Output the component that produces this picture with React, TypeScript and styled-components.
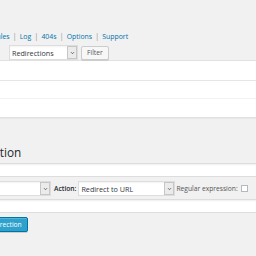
import React from 'react'
import styled, { createGlobalStyle } from 'styled-components'

const GlobalStyle = createGlobalStyle`
  html, body {
    margin: 0;
    padding: 0;
    background: #f1f1f1;
    overflow: hidden;
  }
  body {
    font-family: "Open Sans", "Liberation Sans", sans-serif;
    font-size: 6.7px;
    color: #444;
  }
`

const Page = styled.div`
  width: 256px;
  height: 256px;
  overflow: hidden;
  padding-top: 32px;
  box-sizing: border-box;
`

const SubNav = styled.ul`
  list-style: none;
  display: flex;
  margin: 0 0 0 -92px;
  padding: 0;
  height: 10px;
  line-height: 10px;
  font-size: 6.9px;
  white-space: nowrap;
  color: #8a8a8a;
`

const NavItem = styled.li`
  & + &::before {
    content: '|';
    margin: 0 3.2px;
  }
`

const NavLink = styled.a`
  color: #0073aa;
  text-decoration: none;
`

const TableNav = styled.div`
  display: flex;
  align-items: center;
  gap: 3px;
  height: 15px;
  margin: 3px 0 0 9px;
`

const SelectFrame = styled.div<{ $w: number; $shift?: number }>`
  display: flex;
  align-items: center;
  justify-content: space-between;
  flex: none;
  width: ${p => p.$w}px;
  height: 15px;
  margin-left: ${p => p.$shift ?? 0}px;
  box-sizing: border-box;
  border: 1px solid #ddd;
  background: #fff;
  box-shadow: inset 0 1px 2px rgba(0, 0, 0, 0.05);
  font-size: 7.2px;
  color: #32373c;
`

const SelectText = styled.span`
  padding-left: 2px;
  white-space: nowrap;
`

const SelectArrow = styled.span`
  display: flex;
  align-items: center;
  justify-content: center;
  width: 10px;
  height: 13px;
  box-sizing: border-box;
  background: #ebebeb;
  border: 1px solid #c6c6c6;
`

const Button = styled.button`
  height: 14px;
  padding: 0 5px;
  box-sizing: border-box;
  border: 1px solid #ccc;
  border-radius: 2px;
  background: #f7f7f7;
  box-shadow: 0 1px 0 #ccc;
  font: inherit;
  font-size: 6.7px;
  line-height: 12px;
  color: #555;
`

const PrimaryButton = styled(Button)`
  height: 15px;
  margin: 4px 0 0 -33px;
  border-color: #0074a2;
  background: #2ea2cc;
  box-shadow: inset 0 1px 0 rgba(120, 200, 230, 0.5), 0 1px 0 rgba(0, 0, 0, 0.15);
  color: #fff;
  padding: 0 5px 0 4px;
`

const ListTable = styled.div`
  margin: 0 -10px;
  border: 1px solid #e1e1e1;
  background: #fff;
  box-shadow: 0 1px 1px rgba(0, 0, 0, 0.04);
`

const Row = styled.div<{ $h: number; $line?: string }>`
  height: ${p => p.$h}px;
  border-bottom: ${p => (p.$line ? `1px solid ${p.$line}` : 'none')};
`

const Heading = styled.h2`
  margin: 27px 0 0 -90px;
  font-size: 11.8px;
  font-weight: 400;
  line-height: 15px;
  color: #23282d;
  white-space: nowrap;
`

const TextInput = styled.input`
  display: block;
  width: calc(100% + 20px);
  height: 14px;
  margin: 3px -10px 0;
  box-sizing: border-box;
  border: 1px solid #ddd;
  background: #fff;
  box-shadow: inset 0 1px 2px rgba(0, 0, 0, 0.07);
  outline: none;
`

const MatchRow = styled.div`
  display: flex;
  align-items: center;
  height: 15px;
  margin-top: 4px;
  white-space: nowrap;
`

const Label = styled.span<{ $bold?: boolean; $gap: number }>`
  margin-left: ${p => p.$gap}px;
  font-weight: ${p => (p.$bold ? 600 : 400)};
  color: ${p => (p.$bold ? '#23282d' : '#555')};
`

const CheckBox = styled.span`
  width: 7px;
  height: 7px;
  margin-left: 3px;
  box-sizing: border-box;
  border: 1px solid #b4b9be;
  background: #fff;
`

function Chevron() {
  return (
    <svg width="5" height="4" viewBox="0 0 5 4">
      <path d="M1 1.2 L2.5 2.7 L4 1.2" fill="none" stroke="#555" strokeWidth="0.9" />
    </svg>
  )
}

function Select({ value, w, shift }: { value: string; w: number; shift?: number }) {
  return (
    <SelectFrame $w={w} $shift={shift}>
      <SelectText>{value}</SelectText>
      <SelectArrow>
        <Chevron />
      </SelectArrow>
    </SelectFrame>
  )
}

const links = ['Redirects', 'Groups', 'Modules', 'Log', '404s', 'Options', 'Support']

export default function App() {
  return (
    <>
      <GlobalStyle />
      <Page>
        <SubNav>
          {links.map(l => (
            <NavItem key={l}>
              <NavLink href="#">{l}</NavLink>
            </NavItem>
          ))}
        </SubNav>

        <TableNav>
          <Select value="Redirections" w={69} />
          <Button>Filter</Button>
        </TableNav>

        <ListTable>
          <Row $h={19} $line="#e5e5e5" />
          <Row $h={17} $line="#f2f2f2" />
          <Row $h={18} />
        </ListTable>

        <Heading>Add new redirection</Heading>

        <TextInput />
        <MatchRow>
          <Select value="URL only" w={151} shift={-100} />
          <Label $bold $gap={3}>Action:</Label>
          <Select value="Redirect to URL" w={97} shift={2} />
          <Label $gap={1}>Regular expression:</Label>
          <CheckBox />
        </MatchRow>
        <TextInput />

        <PrimaryButton>Add Redirection</PrimaryButton>
      </Page>
    </>
  )
}
